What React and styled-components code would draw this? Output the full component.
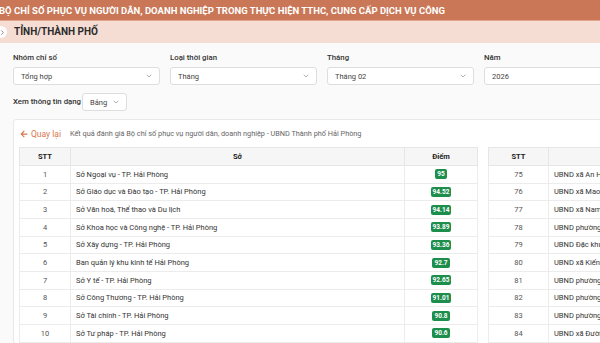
import React from "react";
import styled, { createGlobalStyle } from "styled-components";
import { ChevronDown, ChevronRight } from "lucide-react";
import { FaArrowLeft } from "react-icons/fa";

const GlobalStyle = createGlobalStyle`
  html, body {
    margin: 0;
    padding: 0;
    background: #fafafa;
    overflow: hidden;
  }
  body {
    font-family: Roboto, "Liberation Sans", Arial, sans-serif;
    color: #333;
  }
  * { box-sizing: border-box; }
`;

const leftRows = [
  { stt: 1, name: "Sở Ngoại vụ - TP. Hải Phòng", score: "95" },
  { stt: 2, name: "Sở Giáo dục và Đào tạo - TP. Hải Phòng", score: "94.52" },
  { stt: 3, name: "Sở Văn hoá, Thể thao và Du lịch", score: "94.14" },
  { stt: 4, name: "Sở Khoa học và Công nghệ - TP. Hải Phòng", score: "93.89" },
  { stt: 5, name: "Sở Xây dựng - TP. Hải Phòng", score: "93.36" },
  { stt: 6, name: "Ban quản lý khu kinh tế Hải Phòng", score: "92.7" },
  { stt: 7, name: "Sở Y tế - TP. Hải Phòng", score: "92.65" },
  { stt: 8, name: "Sở Công Thương - TP. Hải Phòng", score: "91.01" },
  { stt: 9, name: "Sở Tài chính - TP. Hải Phòng", score: "90.8" },
  { stt: 10, name: "Sở Tư pháp - TP. Hải Phòng", score: "90.6" },
];

const rightRows = [
  { stt: 75, name: "UBND xã An Hưng", score: "78.2" },
  { stt: 76, name: "UBND xã Mao Điền", score: "78.1" },
  { stt: 77, name: "UBND xã Nam An Phụ", score: "78" },
  { stt: 78, name: "UBND phường Lê Ích Mộc", score: "77.9" },
  { stt: 79, name: "UBND Đặc khu Cát Hải", score: "77.8" },
  { stt: 80, name: "UBND xã Kiến Hải", score: "77.6" },
  { stt: 81, name: "UBND phường Hải An", score: "77.5" },
  { stt: 82, name: "UBND phường Đông Hải", score: "77.4" },
  { stt: 83, name: "UBND phường Nam Đồ Sơn", score: "77.2" },
  { stt: 84, name: "UBND xã Đường An", score: "77.1" },
];

const filters = [
  { label: "Nhóm chỉ số", value: "Tổng hợp", arrow: true },
  { label: "Loại thời gian", value: "Tháng", arrow: true },
  { label: "Tháng", value: "Tháng 02", arrow: true },
  { label: "Năm", value: "2026", arrow: false },
];

export default function App() {
  return (
    <>
      <GlobalStyle />
      <Page>
        <TitleBar>
          BỘ CHỈ SỐ PHỤC VỤ NGƯỜI DÂN, DOANH NGHIỆP TRONG THỰC HIỆN TTHC, CUNG
          CẤP DỊCH VỤ CÔNG
        </TitleBar>
        <SubBar>
          <Toggle>
            <ChevronRight size={7} strokeWidth={2.5} />
          </Toggle>
          TỈNH/THÀNH PHỐ
        </SubBar>
        <Content>
          <FilterRow>
            {filters.map((f) => (
              <Field key={f.label}>
                <Label>{f.label}</Label>
                <Select $width="147px">
                  <span>{f.value}</span>
                  {f.arrow && <ChevronDown size={8} color="#888" />}
                </Select>
              </Field>
            ))}
          </FilterRow>
          <ViewRow>
            <Label>Xem thông tin dạng</Label>
            <Select $width="45px">
              <span>Bảng</span>
              <ChevronDown size={8} color="#888" />
            </Select>
          </ViewRow>
          <Card>
            <CardHead>
              <BackLink>
                <FaArrowLeft size={8} />
                Quay lại
              </BackLink>
              <Caption>
                Kết quả đánh giá Bộ chỉ số phục vụ người dân, doanh nghiệp -
                UBND Thành phố Hải Phòng
              </Caption>
            </CardHead>
            <Tables>
              <ScoreTable rows={leftRows} sttWidth={51} nameWidth={334} />
              <ScoreTable rows={rightRows} sttWidth={60} nameWidth={325} />
            </Tables>
          </Card>
        </Content>
      </Page>
    </>
  );
}

function ScoreTable({ rows, sttWidth, nameWidth }) {
  return (
    <Table>
      <colgroup>
        <col style={{ width: sttWidth }} />
        <col style={{ width: nameWidth }} />
        <col style={{ width: 458 - sttWidth - nameWidth }} />
      </colgroup>
      <thead>
        <tr>
          <Th>STT</Th>
          <Th>Sở</Th>
          <Th>Điểm</Th>
        </tr>
      </thead>
      <tbody>
        {rows.map((r) => (
          <tr key={r.stt}>
            <Td $center>{r.stt}</Td>
            <Td>{r.name}</Td>
            <Td $center>
              <Badge>{r.score}</Badge>
            </Td>
          </tr>
        ))}
      </tbody>
    </Table>
  );
}

const Page = styled.div`
  width: 1000px;
  min-height: 343px;
`;

const TitleBar = styled.div`
  height: 21px;
  background: #c97756;
  border-bottom: 1px solid #e3a58e;
  color: #fff;
  font-size: 9.5px;
  font-weight: 700;
  line-height: 21px;
  white-space: nowrap;
  text-indent: -1px;
`;

const SubBar = styled.div`
  position: relative;
  height: 22px;
  background: #f6ddd4;
  color: #2b2b2b;
  font-size: 10px;
  font-weight: 700;
  line-height: 22px;
  padding-left: 14px;
`;

const Toggle = styled.span`
  position: absolute;
  left: -5px;
  top: 5px;
  width: 12px;
  height: 12px;
  border-radius: 50%;
  background: #fff;
  display: flex;
  align-items: center;
  justify-content: flex-end;
  padding-right: 1px;
  color: #666;
`;

const Content = styled.div`
  padding: 9px 0 0 13px;
`;

const FilterRow = styled.div`
  display: flex;
  gap: 10px;
`;

const Field = styled.div`
  display: flex;
  flex-direction: column;
  gap: 3px;
`;

const Label = styled.div`
  font-size: 7.8px;
  font-weight: 500;
  color: #333;
  line-height: 12px;
`;

const Select = styled.div`
  width: ${(p) => p.$width};
  height: 18px;
  background: #fff;
  border: 1px solid #dedede;
  border-radius: 3px;
  display: flex;
  align-items: center;
  justify-content: space-between;
  padding: 0 6px 0 7px;
  font-size: 7.5px;
  color: #444;
`;

const ViewRow = styled.div`
  display: flex;
  align-items: center;
  gap: 1px;
  margin-top: 8px;
`;

const Card = styled.div`
  margin-top: 8px;
  background: #fff;
  border: 1px solid #e8e8e8;
  border-radius: 3px;
  padding: 0 5px;
`;

const CardHead = styled.div`
  display: flex;
  align-items: center;
  gap: 9px;
  height: 27px;
  padding-left: 1px;
`;

const BackLink = styled.span`
  display: flex;
  align-items: center;
  gap: 3px;
  color: #d8774f;
  font-size: 8.5px;
`;

const Caption = styled.span`
  font-size: 7.3px;
  color: #666;
`;

const Tables = styled.div`
  display: flex;
  gap: 10px;
`;

const Table = styled.table`
  width: 458px;
  table-layout: fixed;
  border-collapse: collapse;
  border: 1px solid #e6e6e6;
  font-size: 7.5px;
`;

const Th = styled.th`
  height: 18px;
  background: #f6f6f6;
  border: 1px solid #e6e6e6;
  font-weight: 700;
  color: #222;
  text-align: center;
  padding: 0;
`;

const Td = styled.td`
  height: 17.67px;
  border: 1px solid #ececec;
  padding: 0 ${(p) => (p.$center ? "0" : "5px")};
  text-align: ${(p) => (p.$center ? "center" : "left")};
  color: ${(p) => (p.$center ? "#555" : "#333")};
  white-space: nowrap;
  overflow: hidden;
`;

const Badge = styled.span`
  display: inline-block;
  background: #1e8e4c;
  color: #fff;
  font-weight: 700;
  font-size: 6.5px;
  line-height: 10px;
  padding: 0 2px;
  border-radius: 2px;
`;
